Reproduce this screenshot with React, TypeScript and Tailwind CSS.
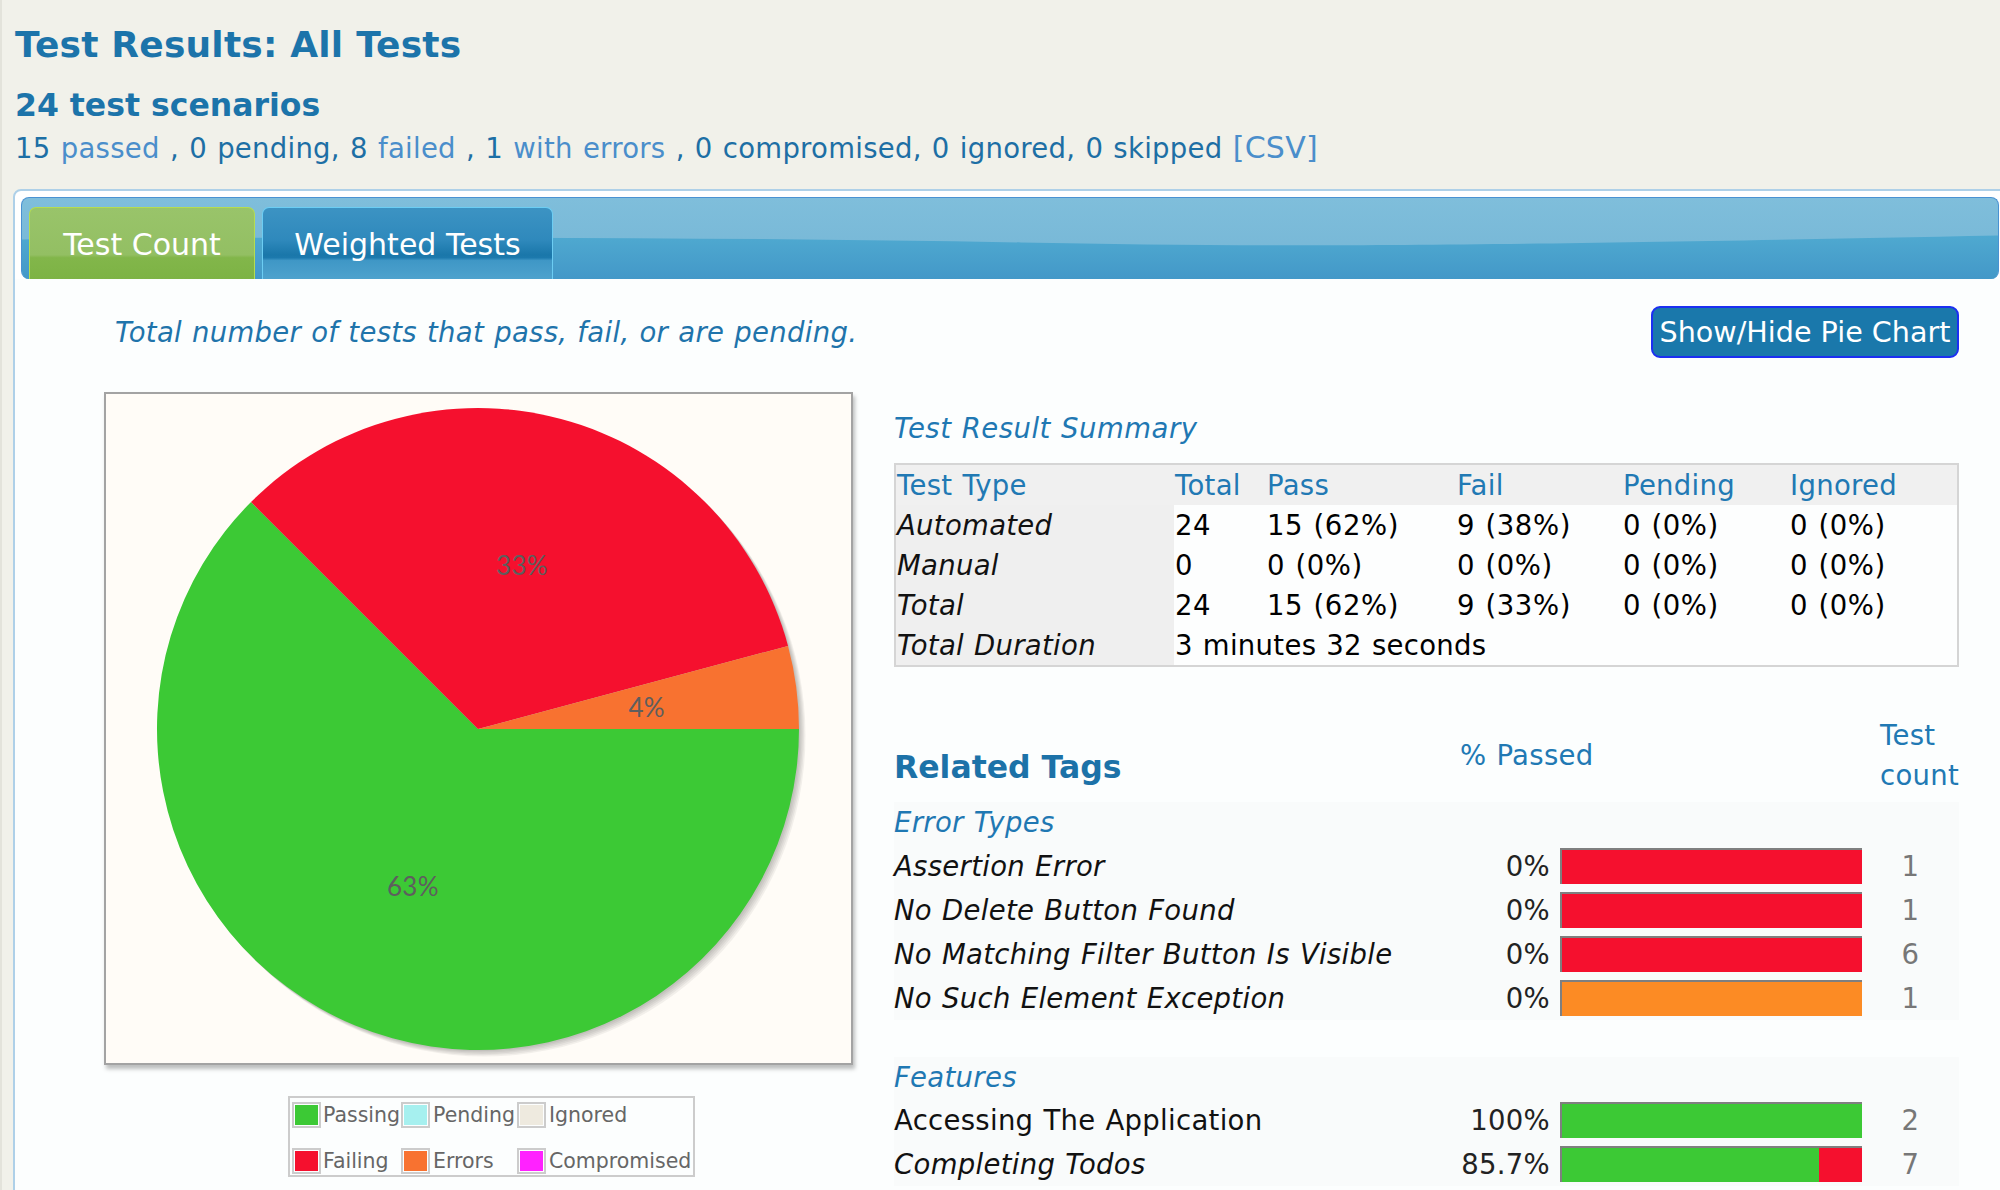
import React from "react";

function PieChart() {
  const cx = 372;
  const cy = 335;
  const r = 321;
  const slices = [
    { pct: 15 / 24, color: "#3cc935", label: "63%" },
    { pct: 8 / 24, color: "#f5102e", label: "33%" },
    { pct: 1 / 24, color: "#f87230", label: "4%" },
  ];
  let a = 0;
  const parts = slices.map((s) => {
    const start = a;
    const end = a + s.pct * Math.PI * 2;
    a = end;
    const x1 = cx + r * Math.cos(start);
    const y1 = cy + r * Math.sin(start);
    const x2 = cx + r * Math.cos(end);
    const y2 = cy + r * Math.sin(end);
    const large = end - start > Math.PI ? 1 : 0;
    const mid = (start + end) / 2;
    return {
      d: `M${cx},${cy} L${x1},${y1} A${r},${r} 0 ${large} 1 ${x2},${y2} Z`,
      color: s.color,
      label: s.label,
      lx: cx + 0.53 * r * Math.cos(mid),
      ly: cy + 0.53 * r * Math.sin(mid),
    };
  });
  return (
    <svg width="745" height="669" viewBox="0 0 745 669">
      {[1, 2, 3, 4, 5].map((i) => (
        <circle key={i} cx={cx + i * 1.3} cy={cy + i * 1.3} r={r} fill="#000" opacity={0.05} />
      ))}
      {parts.map((p) => (
        <path key={p.label} d={p.d} fill={p.color} />
      ))}
      {parts.map((p) => (
        <text
          key={"t" + p.label}
          x={p.lx}
          y={p.ly}
          textAnchor="middle"
          dominantBaseline="central"
          fontFamily="Lato, 'Open Sans', sans-serif"
          fontSize="26"
          fill="#5e5e5e"
        >
          {p.label}
        </text>
      ))}
    </svg>
  );
}

function Swatch({ cls }: { cls: string }) {
  return (
    <div className="w-[29px] h-[26px] border-2 border-[#cccccc] p-[1px] shrink-0">
      <div className={"w-full h-full " + cls} />
    </div>
  );
}

function Legend() {
  return (
    <div className="ml-[184px] mt-[31px] w-[407px] h-[81px] border-2 border-[#cccccc] text-[20.5px] text-[#666666] leading-[26px] tracking-normal [word-spacing:0px]">
      <div className="flex items-start h-[40px] pt-[4px]">
        <div className="w-[33px] flex pl-[2px]"><Swatch cls="bg-[#3cc935]" /></div>
        <div className="w-[77px]">Passing</div>
        <div className="w-[33px] flex pl-[1px]"><Swatch cls="bg-[#a6f0ef]" /></div>
        <div className="w-[84px]">Pending</div>
        <div className="w-[32px] flex"><Swatch cls="bg-[#eeeadf]" /></div>
        <div>Ignored</div>
      </div>
      <div className="flex items-end h-[37px] pb-[1px]">
        <div className="w-[33px] flex pl-[2px]"><Swatch cls="bg-[#f5102e]" /></div>
        <div className="w-[77px]">Failing</div>
        <div className="w-[33px] flex pl-[1px]"><Swatch cls="bg-[#f87230]" /></div>
        <div className="w-[84px]">Errors</div>
        <div className="w-[32px] flex"><Swatch cls="bg-[#ff22ff]" /></div>
        <div>Compromised</div>
      </div>
    </div>
  );
}

const headCls = "px-[1px] text-[#2179b4] bg-[#f0f0f0]";
const rowHeadCls = "px-[1px] italic text-[#111] bg-[#efefef]";
const cellCls = "px-[1px] text-[#000] bg-[#fdfefe] tracking-[0.6px]";

function SummaryTable() {
  const rows = [
    ["Automated", "24", "15 (62%)", "9 (38%)", "0 (0%)", "0 (0%)"],
    ["Manual", "0", "0 (0%)", "0 (0%)", "0 (0%)", "0 (0%)"],
    ["Total", "24", "15 (62%)", "9 (33%)", "0 (0%)", "0 (0%)"],
  ];
  return (
    <div className="mt-[16px] border-2 border-[#d5d5d5] grid grid-cols-[278px_92px_190px_166px_167px_1fr] leading-[40px] text-[27.5px]">
      <div className={headCls}>Test Type</div>
      <div className={headCls}>Total</div>
      <div className={headCls}>Pass</div>
      <div className={headCls}>Fail</div>
      <div className={headCls}>Pending</div>
      <div className={headCls}>Ignored</div>
      {rows.map((r) => (
        <React.Fragment key={r[0]}>
          <div className={rowHeadCls}>{r[0]}</div>
          {r.slice(1).map((c, i) => (
            <div key={i} className={cellCls}>{c}</div>
          ))}
        </React.Fragment>
      ))}
      <div className={rowHeadCls}>Total Duration</div>
      <div className={"px-[1px] text-[#000] bg-[#fdfefe] col-span-5"}>3 minutes 32 seconds</div>
    </div>
  );
}

type TagRow = {
  name: string;
  italic: boolean;
  pct: string;
  pass: number;
  fail: string;
  count: string;
};

function TagLine({ row }: { row: TagRow }) {
  return (
    <div className="flex items-center h-[44px]">
      <div className={"w-[556px] text-[#111] " + (row.italic ? "italic" : "")}>{row.name}</div>
      <div className="w-[100px] text-right text-[#222]">{row.pct}</div>
      <div className="ml-[10px] w-[302px] h-[36px] border-t-2 border-l-2 border-[#7f7f7f] flex">
        <div className="h-full bg-[#3cc935]" style={{ width: `${row.pass}%` }} />
        <div className={"h-full flex-1 " + row.fail} />
      </div>
      <div className="w-[97px] text-center text-[#777]">{row.count}</div>
    </div>
  );
}

function RelatedTags() {
  const errors: TagRow[] = [
    { name: "Assertion Error", italic: true, pct: "0%", pass: 0, fail: "bg-[#f5102e]", count: "1" },
    { name: "No Delete Button Found", italic: true, pct: "0%", pass: 0, fail: "bg-[#f5102e]", count: "1" },
    { name: "No Matching Filter Button Is Visible", italic: true, pct: "0%", pass: 0, fail: "bg-[#f5102e]", count: "6" },
    { name: "No Such Element Exception", italic: true, pct: "0%", pass: 0, fail: "bg-[#fc8b24]", count: "1" },
  ];
  const features: TagRow[] = [
    { name: "Accessing The Application", italic: false, pct: "100%", pass: 100, fail: "bg-[#f5102e]", count: "2" },
    { name: "Completing Todos", italic: true, pct: "85.7%", pass: 85.7, fail: "bg-[#f5102e]", count: "7" },
  ];
  return (
    <div className="mt-[48px] text-[27.5px] leading-[40px]">
      <div className="flex h-[80px]">
        <div className="w-[556px] flex items-end pb-[8px]">
          <span className="text-[31.5px] font-bold text-[#1c72a8] leading-[40px] tracking-normal [word-spacing:0px]">Related Tags</span>
        </div>
        <div className="w-[412px] flex items-center pl-[10px] text-[#2179b4]">% Passed</div>
        <div className="w-[97px] pl-[18px] text-[#2179b4]">
          <div>Test</div>
          <div>count</div>
        </div>
      </div>
      <div className="mt-[7px] bg-[#f9fbfb]">
        <div className="italic text-[#1f78b3]">Error Types</div>
        <div className="mt-[2px]">
          {errors.map((r) => (
            <TagLine key={r.name} row={r} />
          ))}
        </div>
      </div>
      <div className="mt-[37px] bg-[#f9fbfb]">
        <div className="italic text-[#1f78b3]">Features</div>
        <div className="mt-[1px]">
          {features.map((r) => (
            <TagLine key={r.name} row={r} />
          ))}
        </div>
      </div>
    </div>
  );
}

function TabBar() {
  return (
    <div className="relative h-[82px] border-x border-t border-[#4a92d2] rounded-[8px] overflow-hidden bg-[linear-gradient(to_bottom,#7fbedb,#74b5d5)]">
      <svg className="absolute inset-0" width="100%" height="100%" viewBox="0 0 1978 82" preserveAspectRatio="none">
        <defs>
          <linearGradient id="lowband" x1="0" y1="0" x2="0" y2="1">
            <stop offset="0" stopColor="#4fa9d0" />
            <stop offset="1" stopColor="#4398c8" />
          </linearGradient>
        </defs>
        <path d="M0,42 C300,39 650,39 1000,45 C1250,50 1450,49 1978,38 L1978,82 L0,82 Z" fill="url(#lowband)" />
      </svg>
      <div className="relative flex items-end gap-[7px] pl-[7px] pt-[9px] h-full tracking-normal [word-spacing:0px]">
        <div className="w-[226px] h-[72px] rounded-t-[7px] border-x border-t border-[#b5dc50] bg-[linear-gradient(to_bottom,#99c46a_0%,#93bf63_66%,#82b64a_70%,#7db345_100%)] text-white text-[30px] flex justify-center pt-[19px] leading-[36px]">
          Test Count
        </div>
        <div className="w-[291px] h-[72px] rounded-t-[7px] border-x border-t border-[#6ccdf3] bg-[linear-gradient(to_bottom,#3c93c3_0%,#2f89bc_45%,#1a77aa_66%,#1c79ad_70%,#3f97c6_74%,#4ea2cd_100%)] text-white text-[30px] flex justify-center pt-[19px] leading-[36px]">
          Weighted Tests
        </div>
      </div>
    </div>
  );
}

export default function App() {
  return (
    <div className="w-[2000px] h-[1190px] overflow-hidden bg-[#f1f1ea] border-l-2 border-[#e3e3db] font-['DejaVu_Sans',sans-serif] pt-[23px] tracking-[0.3px] [word-spacing:1px]">
      <div className="pl-[13px]">
        <div className="text-[36px] font-bold leading-[43px] text-[#1c74aa] tracking-[0.2px] [word-spacing:0px]">Test Results: All Tests</div>
        <div className="mt-[20px] text-[31.5px] font-bold leading-[38px] text-[#1c74aa] tracking-normal [word-spacing:0px]">24 test scenarios</div>
        <div className="mt-[5px] text-[27.5px] leading-[38px] text-[#1d6fa5] whitespace-nowrap tracking-[0.27px] [word-spacing:1.2px]">
          15 <span className="text-[#4a8ecb]">passed</span> , 0 pending, 8{" "}
          <span className="text-[#4a8ecb]">failed</span> , 1 <span className="text-[#4a8ecb]">with errors</span> , 0
          compromised, 0 ignored, 0 skipped <span className="text-[30px] text-[#4a8ecb]">[CSV]</span>
        </div>
      </div>
      <div className="ml-[11px] mt-[22px] w-[1994px] h-[1100px] border-2 border-[#aed0e8] rounded-tl-[8px] bg-white">
        <div className="px-[6px] pt-[6px]">
          <TabBar />
        </div>
        <div className="bg-[#fcfefe] h-full pl-[89px] pr-[46px] pt-[27px] text-[27.5px]">
          <div className="flex items-center justify-between h-[52px]">
            <div className="ml-[11px] italic text-[#1f74ab] leading-[38px]">
              Total number of tests that pass, fail, or are pending.
            </div>
            <button className="w-[308px] h-[52px] bg-[#1a78ab] border-2 border-[#1c2ff2] rounded-[9px] text-white text-[28.6px] leading-[34px] flex items-center justify-center tracking-normal [word-spacing:0px]">
              Show/Hide Pie Chart
            </button>
          </div>
          <div className="flex mt-[34px] gap-[41px]">
            <div className="w-[749px] shrink-0">
              <div className="w-[749px] h-[673px] border-2 border-[#a3a3a3] bg-[#fffcf7] shadow-[2px_4px_4px_rgba(0,0,0,0.25)]">
                <PieChart />
              </div>
              <Legend />
            </div>
            <div className="w-[1065px] shrink-0">
              <div className="pt-[17px] italic text-[#1f78b3] leading-[38px] tracking-[0.5px]">Test Result Summary</div>
              <SummaryTable />
              <RelatedTags />
            </div>
          </div>
        </div>
      </div>
    </div>
  );
}
